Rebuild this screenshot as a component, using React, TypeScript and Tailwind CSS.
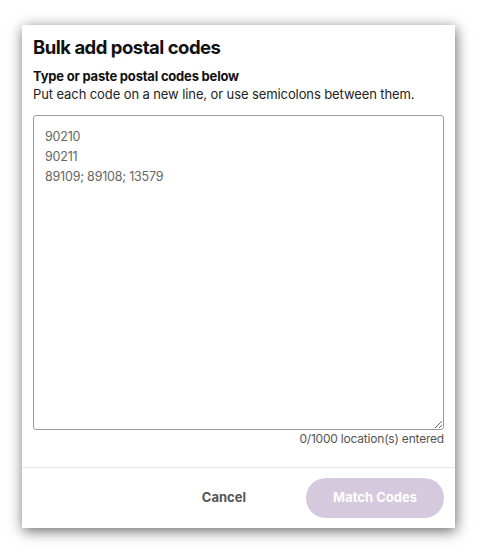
import React from "react";

const codes = "90210\n90211\n89109; 89108; 13579";

export default function App() {
    return (
        <div className="w-[480px] h-[554px] bg-white pt-[25px] pl-[22px] font-['Inter',sans-serif]">
            <div className="w-[433px] h-[503px] bg-white flex flex-col shadow-[1px_3px_13px_rgba(0,0,0,0.6)]">
                <div className="px-[11px] pt-[10px] flex flex-col">
                    <h1 className="text-[18.5px] leading-[24px] font-bold text-[#111] tracking-[-0.5px]">Bulk add postal codes</h1>
                    <p className="mt-[9px] text-[13px] leading-[17px] font-bold text-[#111] tracking-[-0.2px]">Type or paste postal codes below</p>
                    <p className="text-[13px] leading-[18px] text-[#222] tracking-[-0.1px]">Put each code on a new line, or use semicolons between them.</p>
                    <textarea
                        readOnly
                        value={codes}
                        className="mt-[12px] w-[411px] h-[315px] resize-y rounded-[3px] border border-[#9a9a9a] px-[11px] py-[11px] text-[12.5px] leading-[20px] text-[#666] tracking-[-0.2px] outline-none"
                    />
                    <p className="mt-[1px] text-right text-[12px] leading-[16px] text-[#555] tracking-[-0.2px]">0/1000 location(s) entered</p>
                </div>
                <div className="mt-auto border-t border-[#e6e6e6] h-[61px] flex items-center justify-end gap-[60px] pr-[11px]">
                    <button className="text-[13px] font-bold text-[#555]">Cancel</button>
                    <button className="w-[138px] h-[40px] rounded-full bg-[#d5c9dd] text-[13px] font-bold text-white">Match Codes</button>
                </div>
            </div>
        </div>
    );
}
